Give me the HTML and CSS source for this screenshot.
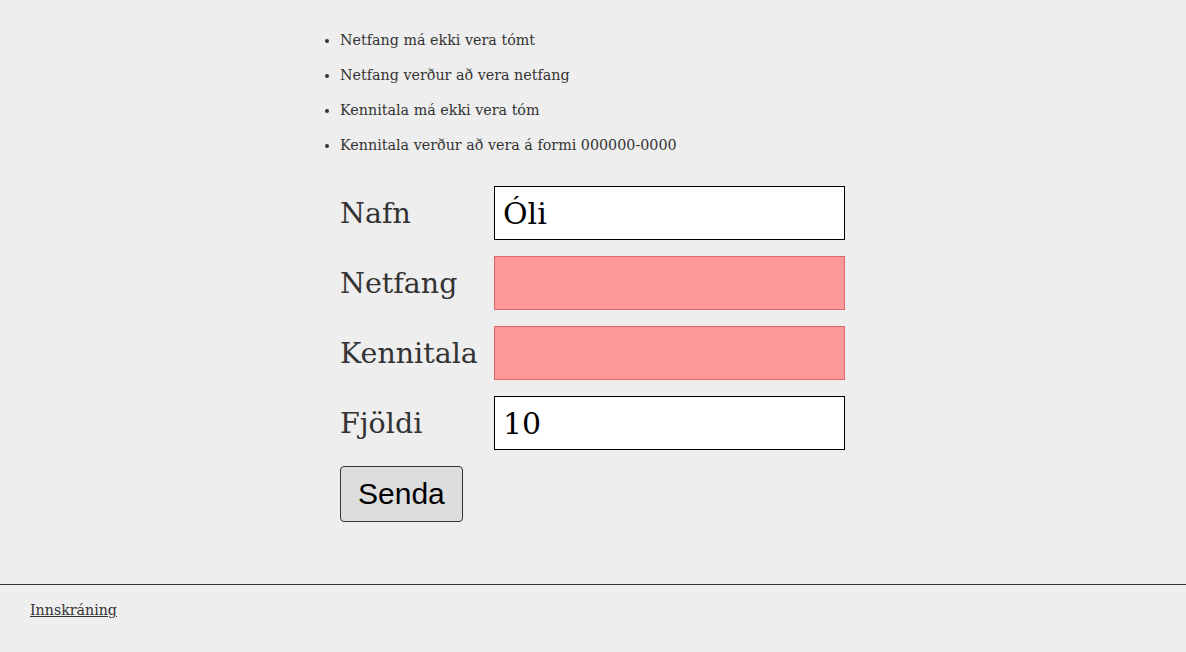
FILE: index.html
```html
<!DOCTYPE html>
<html lang="is">
<head>
<meta charset="utf-8">
<title>Skráning</title>
<link rel="stylesheet" href="styles.css">
</head>
<body>
<main class="main">
  <ul class="errors">
    <li>Netfang má ekki vera tómt</li>
    <li>Netfang verður að vera netfang</li>
    <li>Kennitala má ekki vera tóm</li>
    <li>Kennitala verður að vera á formi 000000-0000</li>
  </ul>
  <form class="form">
    <label class="label" for="name">Nafn</label>
    <input class="input" id="name" type="text" value="Óli">
    <label class="label" for="email">Netfang</label>
    <input class="input input--invalid" id="email" type="text" value="">
    <label class="label" for="ssn">Kennitala</label>
    <input class="input input--invalid" id="ssn" type="text" value="">
    <label class="label" for="amount">Fjöldi</label>
    <input class="input" id="amount" type="text" value="10">
    <button class="button" type="button">Senda</button>
  </form>
</main>
<footer class="footer">
  <a class="footer__link" href="#">Innskráning</a>
</footer>
</body>
</html>
```
FILE: styles.css
```css
html, body {
  margin: 0;
  padding: 0;
  background: #eeeeee;
  color: #333333;
  font-family: Georgia, "DejaVu Serif", serif;
}

.main {
  width: 586px;
  margin: 0 auto;
  padding: 31px 0 62px;
}

.errors {
  margin: 0 0 31px;
  padding-left: 40px;
  font-size: 14.3px;
  line-height: 19px;
}

.errors li {
  margin-bottom: 16px;
}

.errors li:last-child {
  margin-bottom: 0;
}

.form {
  display: grid;
  grid-template-columns: 154px 351px;
  row-gap: 16px;
  align-items: center;
  padding-left: 40px;
}

.label {
  padding-top: 2px;
  font-size: 28.5px;
  line-height: 40px;
  color: #333333;
}

.input {
  box-sizing: border-box;
  width: 351px;
  height: 54px;
  margin: 0;
  padding: 0 8px;
  border: 1px solid #000000;
  background: #ffffff;
  color: #000000;
  font-family: Georgia, "DejaVu Serif", serif;
  font-size: 30px;
  outline: none;
}

.input--invalid {
  background: #ff9999;
  border-color: #dd6666;
}

.button {
  grid-column: 1 / 2;
  justify-self: start;
  box-sizing: border-box;
  height: 56px;
  margin: 0;
  padding: 0 17px;
  border: 1px solid #333333;
  border-radius: 4px;
  background: #dddddd;
  color: #000000;
  font-family: "Liberation Sans", Arial, sans-serif;
  font-size: 30px;
}

.footer {
  border-top: 1px solid #333333;
  padding: 16px 30px 30px;
  font-size: 14.2px;
  line-height: 19px;
}

.footer__link {
  color: #333333;
}
```
